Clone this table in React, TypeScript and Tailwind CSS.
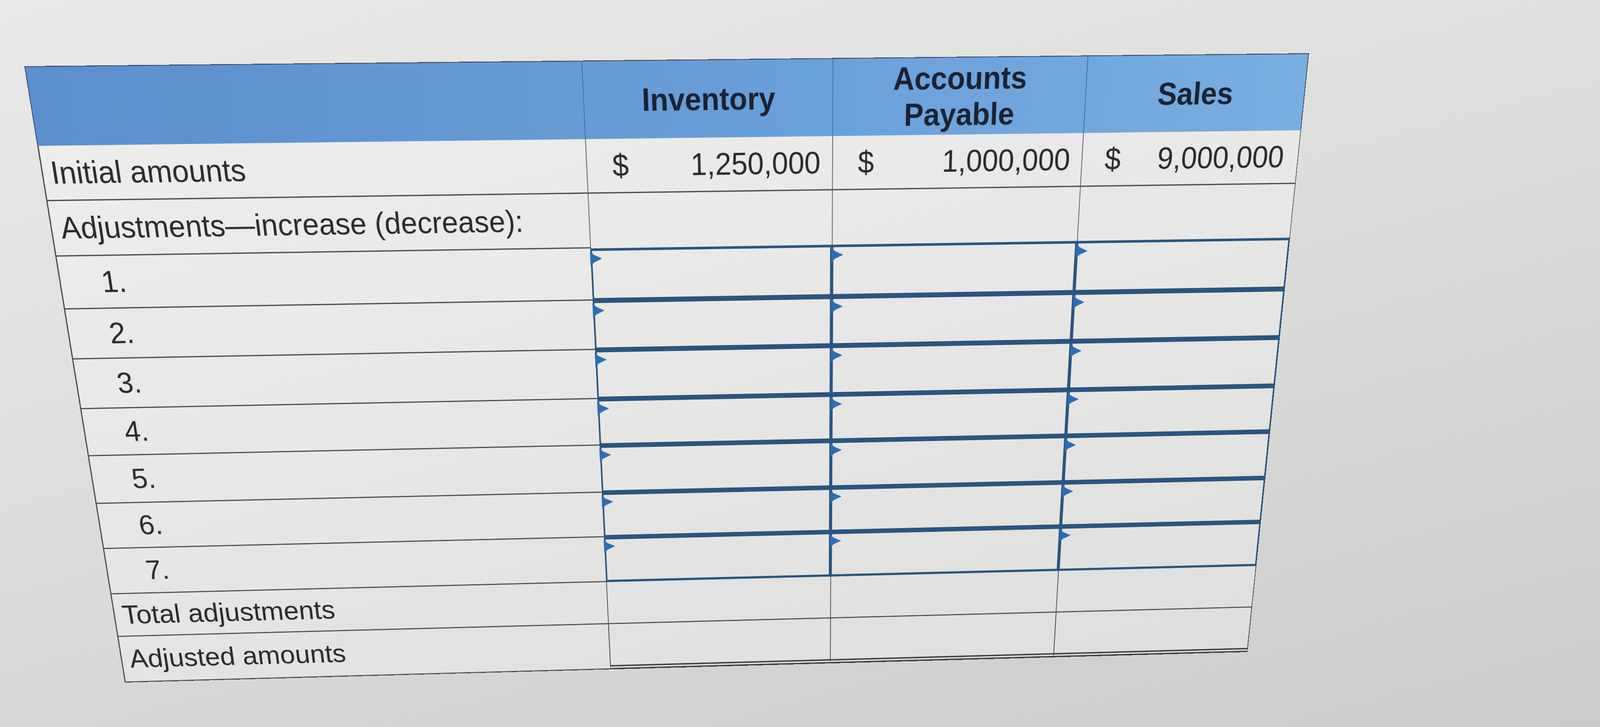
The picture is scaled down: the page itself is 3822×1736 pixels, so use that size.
import React from "react";

const font = "font-['Liberation_Sans',Arial,Helvetica,sans-serif]";

function Marker() {
  return (
    <svg
      className="absolute -left-[5px] top-0 w-[30px] h-[36px]"
      viewBox="0 0 30 36"
      aria-hidden="true"
    >
      <path d="M0 0 L9 9 L29 18 L9 27 L0 36 Z" fill="#2f6db2" />
    </svg>
  );
}

function InputCell() {
  return (
    <div className="relative border-y-[6px] border-x-[4px] border-[#29557f]">
      <Marker />
    </div>
  );
}

const labelBase =
  "flex items-center border-l-[3px] border-b-[3px] border-[#4f4f56] text-[70px] text-[#2a2a2f] whitespace-nowrap";

export default function App() {
  const items = ["1.", "2.", "3.", "4.", "5.", "6.", "7."];
  return (
    <div
      className={`w-[3822px] h-[1736px] overflow-hidden bg-[linear-gradient(165deg,#e9e9e7_0%,#dddedc_45%,#cbcccA_100%)] ${font}`}
    >
      <div className="w-[3000px] h-[1500px] origin-top-left [transform:matrix3d(1.0614,-0.008773,0,0.00001228,0.189067,1.140327,0,0.00009754,0,0,1,0,58,158,0,1)]">
        <div className="grid grid-cols-[1274px_588px_605px_533px] grid-rows-[172px_123px_126px_123px_119px_121px_117px_121px_117px_120px_115px_126px] bg-white/30">
          {/* Header */}
          <div className="col-span-4 grid grid-cols-[1274px_588px_605px_533px] bg-[linear-gradient(90deg,#5b8fcd_0%,#6aa0d9_60%,#79aee1_100%)] border-t-2 border-[#42526e] text-[70px] leading-[80px] font-bold text-[#1b2233]">
            <div className="border-l-2 border-[#42526e]" />
            <div className="flex items-center justify-center text-center border-l-2 border-[#4d72a0]">
              Inventory
            </div>
            <div className="flex items-center justify-center text-center border-l-2 border-[#4d72a0]">
              Accounts
              <br />
              Payable
            </div>
            <div className="flex items-center justify-center text-center border-l-2 border-r-2 border-l-[#4d72a0] border-r-[#42526e]">
              Sales
            </div>
          </div>

          {/* Initial amounts */}
          <div className={`${labelBase} pl-[18px]`}>Initial amounts</div>
          <div className="flex items-center justify-between pl-[60px] pr-[28px] border-l-2 border-l-[#6a6a70] border-b-[3px] border-b-[#4f4f56] text-[70px] text-[#2a2a2f]">
            <span>$</span>
            <span>1,250,000</span>
          </div>
          <div className="flex items-center justify-between pl-[60px] pr-[28px] border-l-2 border-l-[#6a6a70] border-b-[3px] border-b-[#4f4f56] text-[70px] text-[#2a2a2f]">
            <span>$</span>
            <span>1,000,000</span>
          </div>
          <div className="flex items-center justify-between pl-[55px] pr-[34px] border-l-2 border-r-2 border-l-[#6a6a70] border-r-[#6a6a70] border-b-[3px] border-b-[#4f4f56] text-[70px] text-[#2a2a2f]">
            <span>$</span>
            <span>9,000,000</span>
          </div>

          {/* Adjustments heading */}
          <div className={`${labelBase} pl-[20px]`}>
            Adjustments—increase (decrease):
          </div>
          <div className="border-l-2 border-[#6a6a70]" />
          <div className="border-l-2 border-[#6a6a70]" />
          <div className="border-l-2 border-r-2 border-[#6a6a70]" />

          {/* Adjustment rows */}
          {items.map((n) => (
            <React.Fragment key={n}>
              <div className={`${labelBase} pl-[96px]`}>{n}</div>
              <InputCell />
              <InputCell />
              <InputCell />
            </React.Fragment>
          ))}

          {/* Total adjustments */}
          <div className={`${labelBase} pl-[19px]`}>Total adjustments</div>
          <div className="border-l-2 border-b-[3px] border-[#4f4f56]" />
          <div className="border-l-2 border-b-[3px] border-[#4f4f56]" />
          <div className="border-l-2 border-b-[3px] border-r-2 border-[#4f4f56]" />

          {/* Adjusted amounts */}
          <div className={`${labelBase} pl-[19px]`}>Adjusted amounts</div>
          <div className="border-l-2 border-b-[12px] border-double border-[#3f3f46]" />
          <div className="border-l-2 border-b-[12px] border-double border-[#3f3f46]" />
          <div className="border-l-2 border-r-2 border-b-[12px] border-double border-[#3f3f46]" />
        </div>
      </div>
    </div>
  );
}
